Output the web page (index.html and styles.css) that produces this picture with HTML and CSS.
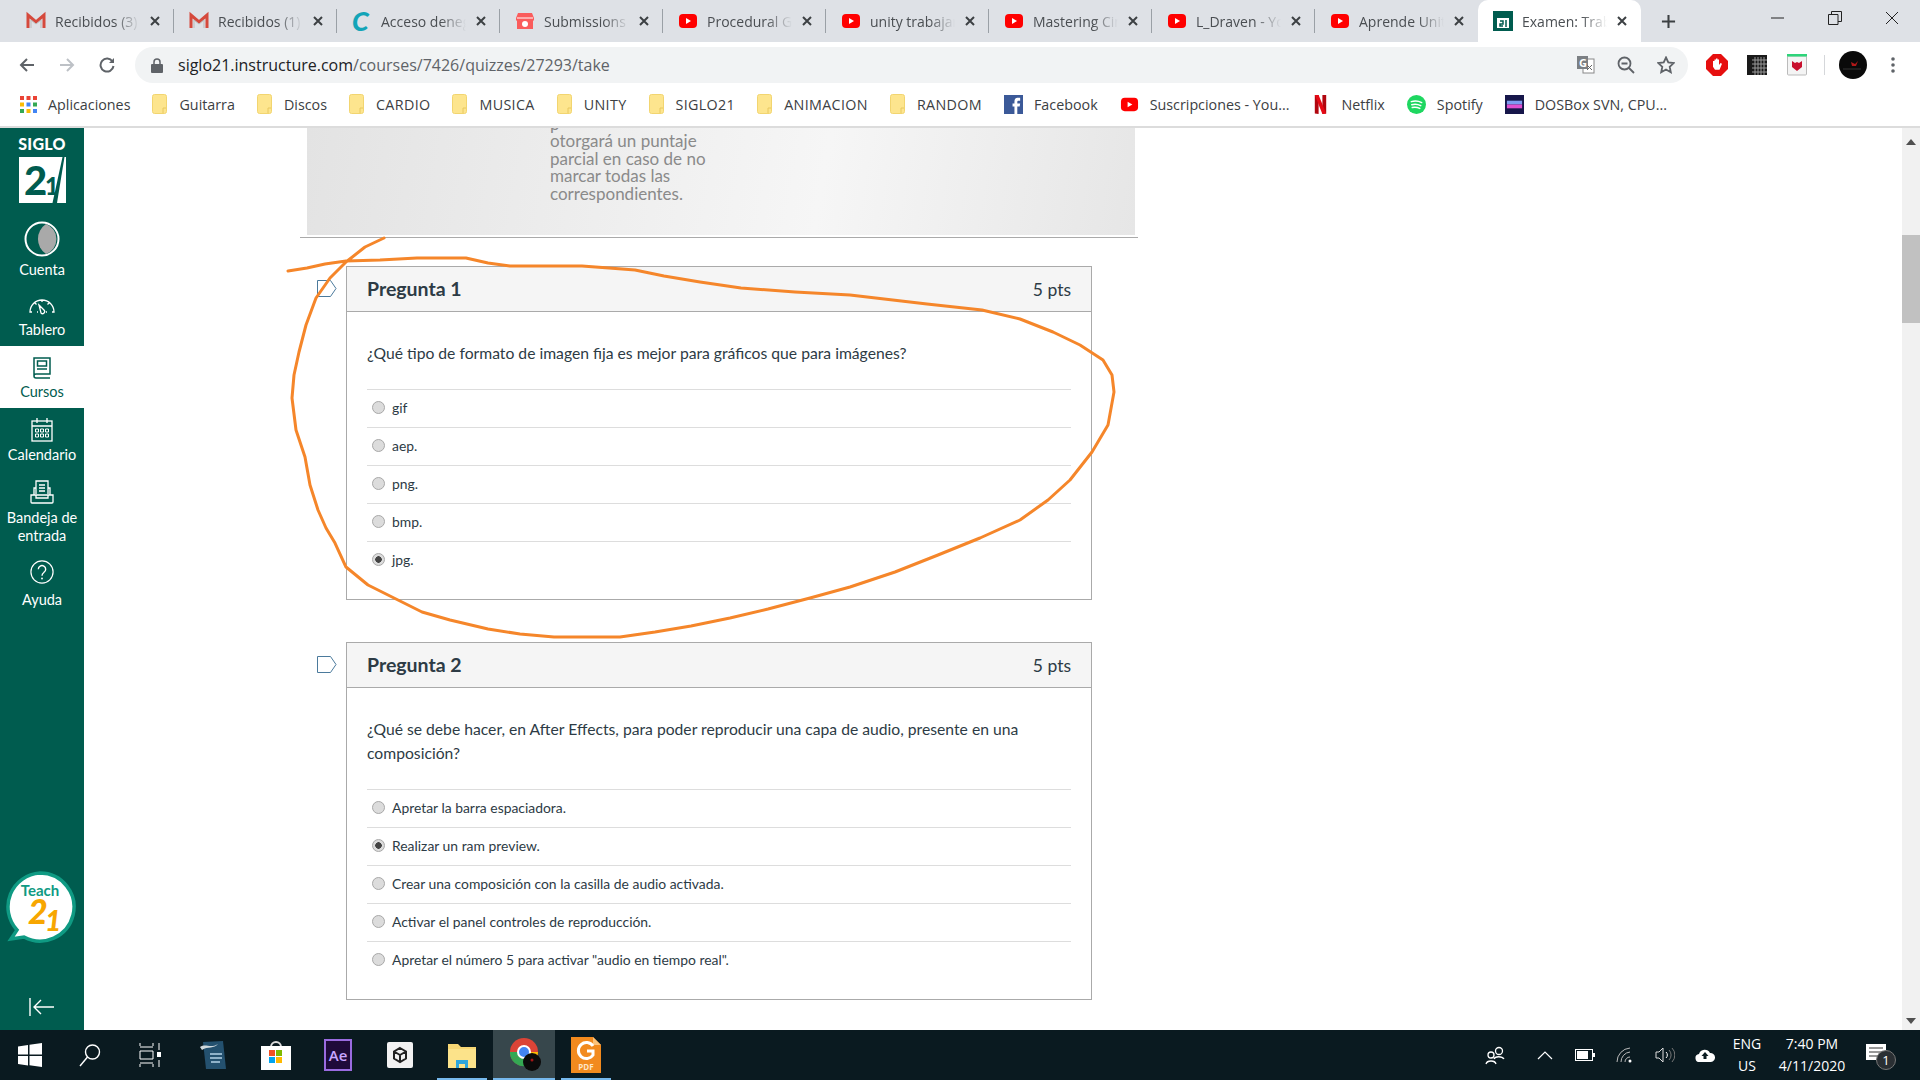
FILE: index.html
```html
<!DOCTYPE html>
<html lang="es">
  <head>
    <meta charset="UTF-8" />
    <title>Examen: Trabajo práctico</title>
    <link rel="stylesheet" href="styles.css">
  </head>
  <body>
    <svg class="defs" width="0" height="0">
      <symbol id="yt" viewBox="0 0 20 20">
        <rect x="1" y="3" width="18" height="14" rx="4" fill="#f00" />
        <path d="M8 7l5 3-5 3z" fill="#fff" />
      </symbol>
      <symbol id="gm" viewBox="0 0 20 20">
        <path d="M2 17V4l8 7 8-7v13" fill="none" stroke="#d5493c" stroke-width="3" />
        <path d="M5 17V9l5 4 5-4v8" fill="none" stroke="#bbb" stroke-width="1" />
      </symbol>
      <symbol id="folder" viewBox="0 0 15 20">
        <rect x="0.5" y="0.5" width="14" height="19" rx="2" fill="#fde58e" stroke="#f2d570" />
        <path d="M11 19v-5h3" fill="none" stroke="#e8c860" />
      </symbol>
      <symbol id="x" viewBox="0 0 10 10">
        <path d="M1 1l8 8M9 1l-8 8" stroke="#3c4043" stroke-width="2" fill="none" />
      </symbol>
    </svg>

    <div class="tabstrip">
      <div class="tab"><div class="tab-in">
        <svg class="fav" viewBox="0 0 20 20"><use href="#gm" /></svg>
        <span class="tab-title">Recibidos (3)</span>
        <svg class="tab-x"><use href="#x" /></svg>
      </div></div>
      <div class="tab"><div class="tab-in">
        <svg class="fav" viewBox="0 0 20 20"><use href="#gm" /></svg>
        <span class="tab-title">Recibidos (1)</span>
        <svg class="tab-x"><use href="#x" /></svg>
      </div></div>
      <div class="tab"><div class="tab-in">
        <span class="fav fav-c">C</span>
        <span class="tab-title">Acceso denegado</span>
        <svg class="tab-x"><use href="#x" /></svg>
      </div></div>
      <div class="tab"><div class="tab-in">
        <svg class="fav" viewBox="0 0 20 20">
          <path d="M3 2h14l2 5v2a3 3 0 0 1-1 1v8H2v-8a3 3 0 0 1-1-1V7z" fill="#fa5c5c" />
          <circle cx="10" cy="13" r="3" fill="#fff" />
          <path d="M2 7h16" stroke="#fff" />
        </svg>
        <span class="tab-title">Submissions</span>
        <svg class="tab-x"><use href="#x" /></svg>
      </div></div>
      <div class="tab"><div class="tab-in">
        <svg class="fav"><use href="#yt" /></svg>
        <span class="tab-title">Procedural Generation</span>
        <svg class="tab-x"><use href="#x" /></svg>
      </div></div>
      <div class="tab"><div class="tab-in">
        <svg class="fav"><use href="#yt" /></svg>
        <span class="tab-title">unity trabajar</span>
        <svg class="tab-x"><use href="#x" /></svg>
      </div></div>
      <div class="tab"><div class="tab-in">
        <svg class="fav"><use href="#yt" /></svg>
        <span class="tab-title">Mastering Cinemachine</span>
        <svg class="tab-x"><use href="#x" /></svg>
      </div></div>
      <div class="tab"><div class="tab-in">
        <svg class="fav"><use href="#yt" /></svg>
        <span class="tab-title">L_Draven - YouTube</span>
        <svg class="tab-x"><use href="#x" /></svg>
      </div></div>
      <div class="tab tab-before"><div class="tab-in">
        <svg class="fav"><use href="#yt" /></svg>
        <span class="tab-title">Aprende Unity</span>
        <svg class="tab-x"><use href="#x" /></svg>
      </div></div>
      <div class="tab tab-active"><div class="tab-in">
        <svg class="fav" viewBox="0 0 20 20">
          <rect width="20" height="20" fill="#005c4f" />
          <rect x="4" y="7" width="12" height="10" fill="#fff" />
          <path d="M7 10h3v3H7v2h3M13 9v7" fill="none" stroke="#005c4f" stroke-width="1.5" />
        </svg>
        <span class="tab-title">Examen: Trabajo</span>
        <svg class="tab-x"><use href="#x" /></svg>
      </div></div>
      <svg class="newtab" viewBox="0 0 16 16"><path d="M8 1v14M1 8h14" stroke="#3c4043" stroke-width="2.2" /></svg>
      <div class="winctl">
        <div class="winbtn"><svg width="14" height="14"><path d="M0 7h13" stroke="#222" /></svg></div>
        <div class="winbtn"><svg width="14" height="14"><path d="M.5 3.5h9.5v10H.5zM3.5 3.5v-3h10v10H10" fill="none" stroke="#222" /></svg></div>
        <div class="winbtn"><svg width="14" height="14"><path d="M1 1l12 12M13 1L1 13" stroke="#222" /></svg></div>
      </div>
    </div>

    <div class="toolbar">
      <div class="tbtn"><svg width="16" height="16"><path d="M15 8H2M8 2L2 8l6 6" fill="none" stroke="#5f6368" stroke-width="2" /></svg></div>
      <div class="tbtn"><svg width="16" height="16"><path d="M1 8h13M8 2l6 6-6 6" fill="none" stroke="#bdc1c6" stroke-width="2" /></svg></div>
      <div class="tbtn"><svg width="16" height="16"><path d="M13.5 4.5A6.5 6.5 0 1 0 14.5 9" fill="none" stroke="#5f6368" stroke-width="2" /><path d="M15 1v5h-5z" fill="#5f6368" /></svg></div>
      <div class="omnibox">
        <svg class="lock" width="12" height="15"><path d="M3 6V4a3 3 0 0 1 6 0v2" fill="none" stroke="#5f6368" stroke-width="1.5" /><rect y="6" width="12" height="9" rx="1" fill="#5f6368" /></svg>
        <span class="url">siglo21.instructure.com<span class="url-path">/courses/7426/quizzes/27293/take</span></span>
        <div class="omni-icons">
          <div class="tbtn"><svg width="18" height="18"><rect x="6" y="3" width="11" height="14" fill="#fff" stroke="#888" /><rect x="0" y="0" width="11" height="13" fill="#7b7f83" /><text x="2" y="11" class="tr-g">G</text><path d="M10 9l5 5M15 9l-5 5" stroke="#666" /></svg></div>
          <div class="tbtn"><svg width="18" height="18"><circle cx="7.5" cy="7.5" r="6" fill="none" stroke="#5f6368" stroke-width="1.8" /><path d="M12 12l5 5M4.5 7.5h6" stroke="#5f6368" stroke-width="1.8" /></svg></div>
          <div class="tbtn"><svg width="18" height="18"><path d="M9 1.5l2.3 5 5.4.6-4 3.7 1.1 5.4L9 13.5l-4.8 2.7 1.1-5.4-4-3.7 5.4-.6z" fill="none" stroke="#5f6368" stroke-width="1.8" /></svg></div>
        </div>
      </div>
      <div class="ext-icons">
        <div class="tbtn"><svg width="22" height="22"><path d="M7 0h8l7 7v8l-7 7H7l-7-7V7z" fill="#e60f0f" /><path d="M7 12V7h1.5v3V5.500H10V10V4.500h1.500V10V5.500H13V11l1.500-2 1.500 .7-2.500 6H9l-2-3z" fill="#fff" /></svg></div>
        <div class="tbtn"><svg width="20" height="20"><rect width="20" height="20" fill="#1a1a1a" /><path d="M5 5h15M5 9h15M5 13h15M5 17h15M8 2v18M11 2v18M14 2v18M17 2v18" stroke="#999" /></svg></div>
        <div class="tbtn"><svg width="20" height="22"><rect x="0.5" y="2" width="19" height="19" rx="1" fill="#f4f4f4" stroke="#bbb" /><rect width="20" height="2.5" fill="#2ed47a" /><path d="M5 7l3 2 2-1 2 1 3-2v6l-5 4-5-4z" fill="#c8102e" /></svg></div>
        <div class="ext-sep"></div>
        <svg class="avatar" width="28" height="28"><circle cx="14" cy="14" r="14" fill="#0a0a0a" /><path d="M12 11l4 2 3-3-2 5-4 0z" fill="#b01818" /><path d="M4 18h18" stroke="#333" /></svg>
        <svg class="menu-dots" width="4" height="16"><circle cx="2" cy="2" r="1.8" fill="#5f6368" /><circle cx="2" cy="8" r="1.8" fill="#5f6368" /><circle cx="2" cy="14" r="1.8" fill="#5f6368" /></svg>
      </div>
    </div>

    <div class="bookmarks">
      <div class="bm">
        <svg class="bm-apps" viewBox="0 0 17 17">
          <rect width="4" height="4" fill="#ea4335" /><rect x="6.5" width="4" height="4" fill="#ea4335" /><rect x="13" width="4" height="4" fill="#ea4335" />
          <rect y="6.5" width="4" height="4" fill="#fbbc04" /><rect x="6.5" y="6.5" width="4" height="4" fill="#4285f4" /><rect x="13" y="6.5" width="4" height="4" fill="#34a853" />
          <rect y="13" width="4" height="4" fill="#34a853" /><rect x="6.5" y="13" width="4" height="4" fill="#fbbc04" /><rect x="13" y="13" width="4" height="4" fill="#4285f4" />
        </svg>
        Aplicaciones
      </div>
      <div class="bm"><svg class="bm-folder"><use href="#folder" /></svg>Guitarra</div>
      <div class="bm"><svg class="bm-folder"><use href="#folder" /></svg>Discos</div>
      <div class="bm bm-caps"><svg class="bm-folder"><use href="#folder" /></svg>CARDIO</div>
      <div class="bm bm-caps"><svg class="bm-folder"><use href="#folder" /></svg>MUSICA</div>
      <div class="bm bm-caps"><svg class="bm-folder"><use href="#folder" /></svg>UNITY</div>
      <div class="bm bm-caps"><svg class="bm-folder"><use href="#folder" /></svg>SIGLO21</div>
      <div class="bm bm-caps"><svg class="bm-folder"><use href="#folder" /></svg>ANIMACION</div>
      <div class="bm bm-caps"><svg class="bm-folder"><use href="#folder" /></svg>RANDOM</div>
      <div class="bm">
        <svg class="bm-icon" viewBox="0 0 20 20"><rect width="20" height="20" fill="#3b5998" /><path d="M14 20v-8h2.500l.5-3h-3V7.500c0-1 .4-1.500 1.500-1.500H17V3h-2.500C12 3 11 4.500 11 7v2H9v3h2v8z" fill="#fff" /></svg>
        Facebook
      </div>
      <div class="bm"><svg class="bm-icon"><use href="#yt" /></svg>Suscripciones - You...</div>
      <div class="bm">
        <svg class="bm-icon" viewBox="0 0 20 20"><path d="M4 0h4v20l-4-.5zM12 0h4v19.5L12 20z" fill="#b1060f" /><path d="M4 0h4l8 19.5L12 20z" fill="#e50914" /></svg>
        Netflix
      </div>
      <div class="bm">
        <svg class="bm-icon" viewBox="0 0 20 20"><circle cx="10" cy="10" r="10" fill="#1ed760" /><path d="M4.500 7c3.500-1 7.500-.8 11 1M5 10.200c3-.8 6.500-.6 9.500 1M5.500 13.200c2.500-.6 5.300-.4 8 1" fill="none" stroke="#fff" stroke-width="1.5" stroke-linecap="round" /></svg>
        Spotify
      </div>
      <div class="bm">
        <svg class="bm-icon" viewBox="0 0 20 20"><rect width="20" height="20" fill="#16164a" /><rect x="2" y="6" width="16" height="4" fill="#7d9cf0" /><rect x="2" y="10" width="16" height="4" fill="#e04fd0" /></svg>
        DOSBox SVN, CPU...
      </div>
    </div>

    <div class="window">
      <nav class="sidebar">
        <div class="logo">
          <div class="logo-name">SIGLO</div>
          <svg class="logo-mark" viewBox="0 0 47 46">
            <rect width="47" height="46" fill="#fff" />
            <text x="5" y="38" class="logo-two">2</text>
            <text x="26" y="38" class="logo-one">1</text>
            <path d="M43.500 0h2L38 46h-4.500z" fill="#005c4f" />
          </svg>
        </div>
        <a class="nav-item nav-account">
          <svg class="nav-avatar" viewBox="0 0 36 36">
            <circle cx="18" cy="18" r="16.5" fill="#005c4f" stroke="#fff" stroke-width="2" />
            <path d="M22 3a16 16 0 0 1 0 30a18 18 0 0 1 0-30z" fill="#a9a9a9" />
          </svg>
          <span>Cuenta</span>
        </a>
        <a class="nav-item">
          <svg class="nav-icon" viewBox="0 0 26 24">
            <path d="M3 18H1a12 12 0 0 1 24 0h-2M13 6v2M6 9l1.500 1.500M20 9l-1.500 1.500" fill="none" stroke="currentColor" stroke-width="1.3" />
            <path d="M10 11l5 5a2 2 0 0 1-3 3z M8 18h1M18 18h-1" fill="none" stroke="currentColor" stroke-width="1.3" />
          </svg>
          <span>Tablero</span>
        </a>
        <a class="nav-item nav-active">
          <svg class="nav-icon" viewBox="0 0 24 24">
            <path d="M4 20V2h16v16H6a2 2 0 0 0 0 4h14" fill="none" stroke="currentColor" stroke-width="1.5" />
            <rect x="7.5" y="5" width="9" height="5" fill="none" stroke="currentColor" stroke-width="1.5" />
            <path d="M7 13h10" stroke="currentColor" stroke-width="1.5" />
          </svg>
          <span>Cursos</span>
        </a>
        <a class="nav-item nav-cal">
          <svg class="nav-icon" viewBox="0 0 24 24">
            <rect x="2" y="3" width="20" height="20" fill="none" stroke="currentColor" stroke-width="1.3" />
            <path d="M2 8h20M7 0v5M17 0v5" fill="none" stroke="currentColor" stroke-width="1.3" />
            <path d="M5.500 11h3v3h-3zM10.500 11h3v3h-3zM15.500 11h3v3h-3zM5.500 16h3v3h-3zM10.500 16h3v3h-3zM15.500 16h3v3h-3z" fill="none" stroke="currentColor" />
          </svg>
          <span>Calendario</span>
        </a>
        <a class="nav-item nav-inbox">
          <svg class="nav-icon" viewBox="0 0 26 24">
            <path d="M7 14V1h12v13" fill="none" stroke="currentColor" stroke-width="1.3" />
            <path d="M10 5h6M10 8h6M10 11h6" stroke="currentColor" stroke-width="1.3" />
            <path d="M7 8H5v7M19 8h2v7M2 15h22v7a1 1 0 0 1-1 1H3a1 1 0 0 1-1-1zM7 15v3h12v-3" fill="none" stroke="currentColor" stroke-width="1.3" />
          </svg>
          <span>Bandeja de entrada</span>
        </a>
        <a class="nav-item nav-help">
          <svg class="nav-icon" viewBox="0 0 26 26">
            <circle cx="13" cy="13" r="12" fill="none" stroke="currentColor" stroke-width="1.3" />
            <path d="M9 10a4 4 0 1 1 6 3.500c-1.500 1-2 1.500-2 3.500" fill="none" stroke="currentColor" stroke-width="1.5" />
            <circle cx="13" cy="20" r="1" fill="currentColor" />
          </svg>
          <span>Ayuda</span>
        </a>
        <svg class="teach" viewBox="0 0 72 72">
          <path d="M36 2a34 34 0 1 1-16 64l-13 2 6-9A34 34 0 0 1 36 2z" fill="#fff" stroke="#0f9a83" stroke-width="3.5" />
          <text x="36" y="25" class="teach-word">Teach</text>
          <text x="24" y="53" class="teach-two">2</text>
          <text x="41" y="60" class="teach-one">1</text>
        </svg>
        <svg class="collapse" width="26" height="18" viewBox="0 0 26 18">
          <path d="M1 0v18M25 9H5M12 2L5 9l7 7" fill="none" stroke="#fff" stroke-width="1.4" />
        </svg>
      </nav>

      <main class="content">
        <div class="intro">
          <div class="intro-banner">
            <div class="intro-text">
              p<br />otorgará un puntaje<br />parcial en caso de no<br />marcar todas las<br />correspondientes.
            </div>
          </div>
        </div>

        <section class="question">
          <svg class="flag" width="20" height="17"><path d="M.5.5h13l5.500 8-5.500 8H.500z" fill="#fff" stroke="#4b7a9c" /></svg>
          <header class="q-head"><h2>Pregunta 1</h2><span class="q-pts">5 pts</span></header>
          <div class="q-body">
            <p class="q-text">¿Qué tipo de formato de imagen fija es mejor para gráficos que para imágenes?</p>
            <div class="answer"><span class="radio"></span>gif</div>
            <div class="answer"><span class="radio"></span>aep.</div>
            <div class="answer"><span class="radio"></span>png.</div>
            <div class="answer"><span class="radio"></span>bmp.</div>
            <div class="answer"><span class="radio radio-on"></span>jpg.</div>
          </div>
        </section>

        <section class="question">
          <svg class="flag" width="20" height="17"><path d="M.5.5h13l5.500 8-5.500 8H.500z" fill="#fff" stroke="#4b7a9c" /></svg>
          <header class="q-head"><h2>Pregunta 2</h2><span class="q-pts">5 pts</span></header>
          <div class="q-body">
            <p class="q-text">¿Qué se debe hacer, en After Effects, para poder reproducir una capa de audio, presente en una composición?</p>
            <div class="answer"><span class="radio"></span>Apretar la barra espaciadora.</div>
            <div class="answer"><span class="radio radio-on"></span>Realizar un ram preview.</div>
            <div class="answer"><span class="radio"></span>Crear una composición con la casilla de audio activada.</div>
            <div class="answer"><span class="radio"></span>Activar el panel controles de reproducción.</div>
            <div class="answer"><span class="radio"></span>Apretar el número 5 para activar "audio en tiempo real".</div>
          </div>
        </section>
      </main>

      <div class="scrollbar">
        <svg class="scroll-arrow" width="10" height="6"><path d="M0 6l5-6 5 6z" fill="#505050" /></svg>
        <div class="scroll-thumb"></div>
        <svg class="scroll-arrow scroll-down" width="10" height="6"><path d="M0 0l5 6 5-6z" fill="#505050" /></svg>
      </div>
    </div>

    <footer class="taskbar">
      <div class="task task-sm">
        <svg width="24" height="24"><path d="M0 3.500l10-1.500v9.500H0zM11.500 1.800L24 0v11.500H11.500zM0 13h10v9.500L0 21zM11.500 13H24v11l-12.500-1.800z" fill="#fff" /></svg>
      </div>
      <div class="task task-sm">
        <svg width="22" height="24"><circle cx="13.5" cy="9" r="7" fill="none" stroke="#fff" stroke-width="1.4" /><path d="M8.500 14L1 23" stroke="#fff" stroke-width="1.4" /></svg>
      </div>
      <div class="task task-sm">
        <svg width="22" height="24"><path d="M1 4h13M1 20h13M1 8h13v8H1zM1 0v3M14 0v3M1 21v3M14 21v3M20 0v7M20 17v7" fill="none" stroke="#fff" /><rect x="18" y="9" width="4" height="5" fill="#fff" /></svg>
      </div>
      <div class="task task-first">
        <svg width="28" height="30"><path d="M3 2l20-1 3 28H6z" fill="#24516f" /><path d="M0 7c6-4 10 2 18-3-4 5-10 2-16 6z" fill="#cfd8dc" /><path d="M10 14h12M10 18h12M11 22h9" stroke="#8fb2c9" stroke-width="2" /></svg>
      </div>
      <div class="task">
        <svg width="30" height="30"><path d="M10 7a5 5 0 0 1 10 0" fill="none" stroke="#ddd" stroke-width="2" /><rect y="6" width="30" height="24" fill="#fff" /><rect x="8" y="10" width="6" height="6" fill="#f25022" /><rect x="15" y="10" width="6" height="6" fill="#7fba00" /><rect x="8" y="17" width="6" height="6" fill="#00a4ef" /><rect x="15" y="17" width="6" height="6" fill="#ffb900" /></svg>
      </div>
      <div class="task"><span class="ae">Ae</span></div>
      <div class="task">
        <svg width="26" height="26"><rect width="26" height="26" rx="2" fill="#f2f2f2" /><path d="M13 6l6 3.500v7L13 20l-6-3.500v-7zM13 13l6-3.500M13 13v7M13 13L7 9.500" fill="none" stroke="#222" stroke-width="2" /></svg>
      </div>
      <div class="task task-run">
        <svg width="28" height="26"><path d="M0 2h10l3 3h15v21H0z" fill="#f7d774" /><rect y="7" width="28" height="19" fill="#fce38a" /><path d="M8 26v-8h12v8h-3v-4h-6v4z" fill="#2ea6dc" /></svg>
      </div>
      <div class="task task-run task-open">
        <svg class="chrome" width="32" height="34" viewBox="0 0 32 34">
          <circle cx="14" cy="14" r="14" fill="#db4437" />
          <path d="M14 14L2 22A14 14 0 0 0 18 27.500z" fill="#34a853" />
          <path d="M14 14l14 0a14 14 0 0 1-10 13.500z" fill="#fbbc04" />
          <path d="M0 14a14 14 0 0 0 2 8l12-8z" fill="#34a853" />
          <circle cx="14" cy="14" r="6" fill="#4285f4" stroke="#fff" stroke-width="2" />
          <circle cx="22" cy="24" r="9" fill="#0b0b0b" />
          <circle cx="22" cy="22" r="1.5" fill="#a31515" />
        </svg>
      </div>
      <div class="task task-run">
        <svg width="30" height="36" viewBox="0 0 30 36">
          <path d="M0 0h22l8 8v28H0z" fill="#f28a1e" />
          <path d="M22 0l8 8h-8z" fill="#fbc27a" />
          <path d="M22 9a8 8 0 1 0 0 9v-4h-6" fill="none" stroke="#fff" stroke-width="3" />
          <text x="15" y="33" class="pdf-word">PDF</text>
        </svg>
      </div>
      <div class="tray">
        <div class="tray-item tray-people">
          <svg width="20" height="20" fill="none" stroke="#fff" stroke-width="1.3"><circle cx="14" cy="6" r="3.500" /><path d="M9 14c1-3 8-3 10 0" /><circle cx="6" cy="10" r="3" /><path d="M1 19c1-4 9-4 10 0" /></svg>
        </div>
        <div class="tray-item"><svg width="16" height="10"><path d="M1 9l7-7 7 7" fill="none" stroke="#fff" stroke-width="1.2" /></svg></div>
        <div class="tray-item"><svg width="20" height="12"><rect x=".5" y=".5" width="17" height="11" fill="none" stroke="#fff" /><rect x="2" y="2" width="11" height="8" fill="#fff" /><rect x="18" y="4" width="2" height="4" fill="#fff" /></svg></div>
        <div class="tray-item"><svg width="18" height="16" fill="none" stroke="#bbb"><path d="M1 15a14 14 0 0 1 13-14M5 15a10 10 0 0 1 9-10M9 15a5 5 0 0 1 5-5" /><circle cx="14" cy="14" r="1.5" fill="#fff" stroke="none" /></svg></div>
        <div class="tray-item"><svg width="20" height="16" fill="none"><path d="M1 5h3l4-4v14l-4-4H1z" stroke="#ddd" /><path d="M11 5a4 4 0 0 1 0 6" stroke="#fff" /><path d="M14 3a7 7 0 0 1 0 10M17 1a10 10 0 0 1 0 14" stroke="#777" /></svg></div>
        <div class="tray-item"><svg width="20" height="14"><path d="M5 14a4 4 0 0 1-1-8 6 6 0 0 1 11-1 4.500 4.500 0 0 1 1 9z" fill="#fff" /><path d="M10 4l3.500 4H11.500v3h-3V8H6.500z" fill="#0b1c22" /></svg></div>
        <div class="tray-lang"><span>ENG</span><span>US</span></div>
        <div class="tray-clock"><span>7:40 PM</span><span>4/11/2020</span></div>
        <div class="tray-note">
          <svg width="20" height="16"><path d="M0 0h20v16H0z" fill="#fff" /><path d="M3 4h14M3 8h14M3 12h10" stroke="#333" /></svg>
          <span class="note-badge">1</span>
        </div>
      </div>
    </footer>

    <svg class="scribble" width="1920" height="1080" viewBox="0 0 1920 1080">
      <polyline points="384,238 365,247 346,262 330,278 316,298 306,325 299,352 294,375 292,398 296,430 305,457 310,485 318,510 326,528 335,543 346,567 368,585 398,600 422,612 450,620 488,629 520,634 554,637 620,637 655,632 691,626 730,618 768,609 810,598 850,587 895,572 938,555 980,538 1020,520 1048,500 1070,480 1092,452 1108,425 1114,392 1112,375 1103,360 1080,345 1053,332 1020,319 982,310 927,304 850,295 795,292 741,288 700,282 664,276 635,270 609,268 582,266 545,266 510,266 488,263 466,258 417,258 380,260 346,261 325,264 307,268 288,271" />
    </svg>
  </body>
</html>
```

FILE: styles.css
```css
* {
  box-sizing: border-box;
}
html,
body {
  margin: 0;
  padding: 0;
  width: 1920px;
  height: 1080px;
  overflow: hidden;
  background: #fff;
}
body {
  display: flex;
  flex-direction: column;
  font-family: "Open Sans", sans-serif;
  position: relative;
}
.defs {
  position: absolute;
}

/* tab strip */
.tabstrip {
  height: 42px;
  flex: none;
  display: flex;
  align-items: center;
  padding-left: 11px;
  background: #dee1e6;
}
.tab {
  width: 163px;
  height: 42px;
  flex: none;
  display: flex;
  align-items: center;
}
.tab-in {
  width: 100%;
  height: 24px;
  display: flex;
  align-items: center;
  padding-left: 15px;
  border-right: 1px solid #9aa0a6;
}
.tab-before .tab-in,
.tab-active .tab-in {
  border-right: none;
}
.tab-active {
  background: #fff;
  border-radius: 10px 10px 0 0;
}
.fav {
  width: 20px;
  height: 20px;
  flex: none;
}
.fav-c {
  font-family: "Lato", sans-serif;
  font-weight: 900;
  font-style: italic;
  font-size: 27px;
  line-height: 20px;
  color: #13a5b8;
}
.tab-title {
  width: 85px;
  margin-left: 9px;
  overflow: hidden;
  white-space: nowrap;
  font-size: 14px;
  color: #4a4e52;
  -webkit-mask-image: linear-gradient(to right, #000 70%, transparent);
  mask-image: linear-gradient(to right, #000 70%, transparent);
}
.tab-x {
  width: 10px;
  height: 10px;
  margin-left: 10px;
  flex: none;
}
.newtab {
  width: 15px;
  height: 15px;
  margin-left: 20px;
}
.winctl {
  margin-left: auto;
  display: flex;
  align-self: flex-start;
}
.winbtn {
  width: 57px;
  height: 36px;
  display: flex;
  align-items: center;
  justify-content: center;
}

/* toolbar */
.toolbar {
  height: 46px;
  flex: none;
  display: flex;
  align-items: center;
  padding-left: 7px;
  background: #fff;
}
.tbtn {
  width: 40px;
  height: 36px;
  flex: none;
  display: flex;
  align-items: center;
  justify-content: center;
}
.omnibox {
  width: 1553px;
  height: 36px;
  margin-left: 8px;
  display: flex;
  align-items: center;
  padding-left: 16px;
  border-radius: 18px;
  background: #f1f3f4;
}
.url {
  margin-left: 15px;
  font-size: 16px;
  color: #202124;
}
.url-path {
  color: #5f6368;
}
.omni-icons {
  margin-left: auto;
  display: flex;
  padding-right: 2px;
}
.tr-g {
  font-family: "Open Sans", sans-serif;
  font-size: 11px;
  font-weight: 700;
  fill: #fff;
}
.ext-icons {
  display: flex;
  align-items: center;
  margin-left: 9px;
}
.ext-sep {
  width: 1px;
  height: 20px;
  margin-left: 7px;
  background: #d5d7da;
}
.avatar {
  margin-left: 14px;
}
.menu-dots {
  margin-left: 24px;
}

/* bookmarks */
.bookmarks {
  height: 40px;
  flex: none;
  display: flex;
  align-items: center;
  gap: 22px;
  padding: 0 0 6px 20px;
  border-bottom: 2px solid #dcdcdc;
  background: #fff;
  font-size: 14.3px;
  color: #3c4043;
}
.bm {
  display: flex;
  align-items: center;
  gap: 11px;
  white-space: nowrap;
}
.bm-caps {
  letter-spacing: 0.35px;
}
.bm-folder {
  width: 15px;
  height: 20px;
  margin-right: 1px;
}
.bm-apps {
  width: 17px;
  height: 17px;
}
.bm-icon {
  width: 19px;
  height: 19px;
}

/* page area */
.window {
  flex: 1;
  min-height: 0;
  display: flex;
}
.sidebar {
  width: 84px;
  flex: none;
  display: flex;
  flex-direction: column;
  background: #005c4f;
  color: #fff;
  font-family: "Lato", sans-serif;
  font-size: 14.5px;
}
.logo {
  height: 93px;
  flex: none;
  padding-top: 6px;
  display: flex;
  flex-direction: column;
  align-items: center;
}
.logo-name {
  font-size: 16px;
  font-weight: 900;
  line-height: 19px;
  letter-spacing: 0.3px;
}
.logo-mark {
  width: 47px;
  height: 46px;
  margin-top: 4px;
}
.logo-two {
  font-family: "Lato", sans-serif;
  font-weight: 900;
  font-size: 40px;
  fill: #005c4f;
}
.logo-one {
  font-family: "Lato", sans-serif;
  font-weight: 900;
  font-size: 24px;
  fill: #005c4f;
}
.nav-item {
  display: flex;
  flex-direction: column;
  align-items: center;
  gap: 3px;
  padding: 10px 0 7px;
  line-height: 18px;
  text-align: center;
}
.nav-account {
  padding: 0 0 5px;
  gap: 4px;
}
.nav-cal {
  gap: 4px;
  padding-bottom: 6px;
}
.nav-inbox {
  gap: 5px;
  padding-bottom: 5px;
}
.nav-help {
  gap: 7px;
  padding-bottom: 3px;
}
.nav-active {
  background: #fff;
  color: #005c4f;
}
.nav-avatar {
  width: 36px;
  height: 36px;
}
.nav-icon {
  width: 26px;
  height: 24px;
}
.teach {
  width: 72px;
  height: 72px;
  margin: auto 0 0 4px;
  flex: none;
}
.teach-word {
  font-family: "Lato", sans-serif;
  font-size: 15px;
  font-weight: 700;
  fill: #0f9a83;
  text-anchor: middle;
}
.teach-two {
  font-family: "Lato", sans-serif;
  font-size: 34px;
  font-weight: 900;
  font-style: italic;
  fill: #f7a600;
}
.teach-one {
  font-family: "Lato", sans-serif;
  font-size: 28px;
  font-weight: 900;
  font-style: italic;
  fill: #f7a600;
}
.collapse {
  flex: none;
  margin: 55px 0 14px 29px;
}

.content {
  flex: 1;
  min-width: 0;
  overflow: hidden;
  padding-left: 216px;
  font-family: "Lato", sans-serif;
  color: #2d3b45;
}
.intro {
  width: 838px;
  height: 110px;
  padding: 0 3px 0 7px;
  border-bottom: 1px solid #aaa;
}
.intro-banner {
  height: 107px;
  display: flex;
  flex-direction: column;
  justify-content: flex-end;
  overflow: hidden;
  padding: 0 0 33px 243px;
  background: linear-gradient(100deg, #e3e3e3, #f6f6f6 62%, #e6e6e6);
}
.intro-text {
  font-size: 17px;
  line-height: 17.5px;
  color: #8a8a8a;
}
.question {
  position: relative;
  width: 746px;
  margin: 42px 0 0 46px;
  border: 1px solid #aaa;
}
.intro + .question {
  margin-top: 28px;
}
.flag {
  position: absolute;
  top: 13px;
  left: -30px;
}
.q-head {
  height: 45px;
  display: flex;
  align-items: center;
  justify-content: space-between;
  padding: 0 20px 2px;
  background: #f5f5f5;
  border-bottom: 1px solid #aaa;
}
.q-head h2 {
  margin: 0;
  font-size: 19.5px;
  font-weight: 700;
}
.q-pts {
  margin-top: 2px;
  font-size: 17.5px;
}
.q-body {
  padding: 29px 20px 20px;
}
.q-text {
  margin: 0 0 24px;
  font-size: 15.7px;
  line-height: 24px;
}
.answer {
  height: 38px;
  display: flex;
  align-items: center;
  padding: 0 0 3px 5px;
  border-top: 1px solid #ddd;
  font-size: 13.9px;
}
.radio {
  width: 13px;
  height: 13px;
  margin: 1px 7px 0 0;
  flex: none;
  border: 1px solid #a8a8a8;
  border-radius: 50%;
  background: #dcdcdc;
}
.radio-on {
  background: radial-gradient(circle, #444 0 3px, #dcdcdc 3.5px);
}
.scrollbar {
  width: 18px;
  flex: none;
  position: relative;
  background: #f1f1f1;
  display: flex;
  flex-direction: column;
  align-items: center;
}
.scroll-arrow {
  margin-top: 11px;
  flex: none;
}
.scroll-thumb {
  width: 18px;
  height: 88px;
  margin-top: 90px;
  background: #c1c1c1;
}
.scroll-down {
  margin-top: auto;
  margin-bottom: 6px;
}

/* windows taskbar */
.taskbar {
  height: 50px;
  flex: none;
  display: flex;
  align-items: stretch;
  background: #0a1a20;
}
.task {
  width: 62px;
  flex: none;
  display: flex;
  align-items: center;
  justify-content: center;
  position: relative;
}
.task-sm {
  width: 60px;
}
.task-first {
  margin-left: 3px;
}
.task-run::after {
  content: "";
  position: absolute;
  left: 6px;
  right: 6px;
  bottom: 0;
  height: 2px;
  background: #76b9ed;
}
.task-open {
  background: #37474c;
}
.task-open::after {
  left: 0;
  right: 0;
}
.chrome {
  margin-left: 3px;
}
.ae {
  width: 28px;
  height: 32px;
  display: flex;
  align-items: center;
  justify-content: center;
  border: 2px solid #9a6be0;
  background: #1f0a3a;
  color: #c9a6ff;
  font-size: 15px;
  font-weight: 600;
}
.pdf-word {
  font-family: "Open Sans", sans-serif;
  font-size: 8px;
  font-weight: 700;
  fill: #fde5c8;
  text-anchor: middle;
}
.tray {
  margin-left: auto;
  display: flex;
  align-items: center;
  color: #fff;
  font-size: 14px;
  padding-right: 13px;
}
.tray-item {
  width: 40px;
  display: flex;
  justify-content: center;
}
.tray-people {
  margin-right: 10px;
}
.tray-lang,
.tray-clock {
  display: flex;
  flex-direction: column;
  align-items: center;
  line-height: 22px;
}
.tray-lang {
  width: 40px;
  margin-left: 2px;
}
.tray-clock {
  width: 90px;
}
.tray-note {
  width: 46px;
  height: 30px;
  position: relative;
  margin-left: 4px;
  padding: 4px 0 0 5px;
}
.note-badge {
  position: absolute;
  top: 10px;
  left: 15px;
  width: 20px;
  height: 20px;
  display: flex;
  align-items: center;
  justify-content: center;
  border: 1px solid #777;
  border-radius: 50%;
  background: #2a2f33;
  font-size: 13px;
}

/* orange pen stroke drawn over the page */
.scribble {
  position: absolute;
  top: 0;
  left: 0;
  pointer-events: none;
}
.scribble polyline {
  fill: none;
  stroke: #f5862a;
  stroke-width: 3;
  stroke-linejoin: round;
  stroke-linecap: round;
}
```
